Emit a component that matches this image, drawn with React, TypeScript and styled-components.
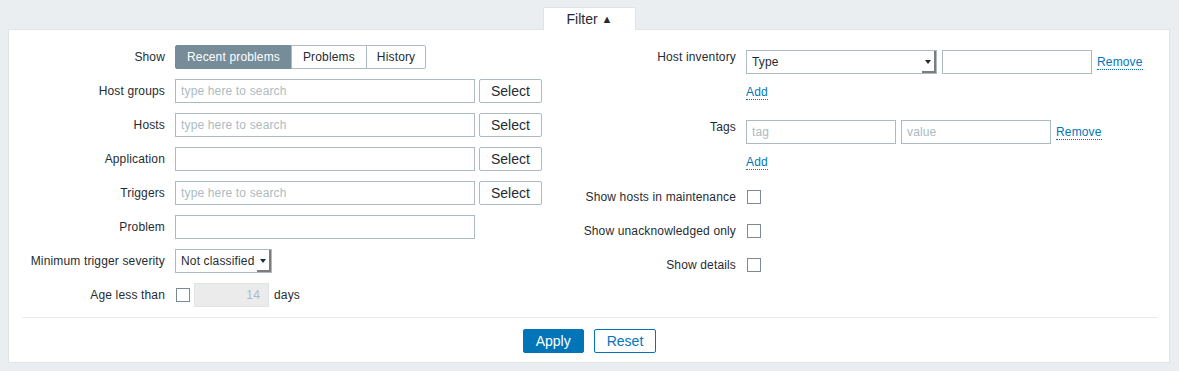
import styled, {createGlobalStyle} from "styled-components";

const GlobalStyle = createGlobalStyle`
  html, body {
    margin: 0;
    padding: 0;
    background: #ebeef0;
  }
  body {
    font-family: "Liberation Sans", Arial, sans-serif;
    font-size: 12px;
    letter-spacing: 0.15px;
    color: #1f2c33;
  }
  * { box-sizing: border-box; }
`

type FieldRow = { label: string, placeholder?: string, withSelect?: boolean }

const leftRows: FieldRow[] = [
    {label: "Host groups", placeholder: "type here to search", withSelect: true},
    {label: "Hosts", placeholder: "type here to search", withSelect: true},
    {label: "Application", withSelect: true},
    {label: "Triggers", placeholder: "type here to search", withSelect: true},
    {label: "Problem"},
]

const showOptions = ["Recent problems", "Problems", "History"]

const checkRows = ["Show hosts in maintenance", "Show unacknowledged only", "Show details"]

export default function App() {
    return (
        <Page>
            <GlobalStyle/>
            <TabBar>
                <Tab>Filter <TabArrow>▲</TabArrow></Tab>
            </TabBar>
            <Panel>
                <Columns>
                    <LeftForm>
                        <Label>Show</Label>
                        <Segmented>
                            {showOptions.map((o, i) => (
                                <Segment key={o} active={i === 0}>{o}</Segment>
                            ))}
                        </Segmented>

                        {leftRows.map(r => (
                            <FormRowFragment key={r.label} row={r}/>
                        ))}

                        <Label>Minimum trigger severity</Label>
                        <Controls>
                            <DropDown width={97}>
                                <DropText>Not classified</DropText>
                                <DropArrow/>
                            </DropDown>
                        </Controls>

                        <Label>Age less than</Label>
                        <Controls>
                            <CheckBox/>
                            <DisabledInput>14</DisabledInput>
                            <span>days</span>
                        </Controls>
                    </LeftForm>

                    <RightForm>
                        <TopLabel>Host inventory</TopLabel>
                        <Stack>
                            <Controls gap={5}>
                                <DropDown width={191}>
                                    <DropText>Type</DropText>
                                    <DropArrow/>
                                </DropDown>
                                <TextInput width={150}/>
                                <LinkText>Remove</LinkText>
                            </Controls>
                            <AddLine><LinkText>Add</LinkText></AddLine>
                        </Stack>

                        <TopLabel>Tags</TopLabel>
                        <Stack>
                            <Controls gap={5}>
                                <TextInput width={150} placeholder="tag"/>
                                <TextInput width={150} placeholder="value"/>
                                <LinkText>Remove</LinkText>
                            </Controls>
                            <AddLine><LinkText>Add</LinkText></AddLine>
                        </Stack>

                        {checkRows.map(c => (
                            <CheckRowFragment key={c} label={c}/>
                        ))}
                    </RightForm>
                </Columns>

                <Footer>
                    <PrimaryButton>Apply</PrimaryButton>
                    <OutlineButton>Reset</OutlineButton>
                </Footer>
            </Panel>
        </Page>
    );
}

const FormRowFragment = ({row}: { row: FieldRow }) => (
    <>
        <Label>{row.label}</Label>
        <Controls>
            <TextInput width={300} placeholder={row.placeholder}/>
            {row.withSelect && <GreyButton>Select</GreyButton>}
        </Controls>
    </>
)

const CheckRowFragment = ({label}: { label: string }) => (
    <>
        <Label>{label}</Label>
        <Controls>
            <CheckBox/>
        </Controls>
    </>
)

const Page = styled.div`
  padding: 7px 9px 0 8px;
  height: 371px;
`

const TabBar = styled.div`
  display: flex;
  justify-content: center;
  margin-left: 1px;
`

const Tab = styled.div`
  width: 93px;
  height: 23px;
  margin-bottom: -1px;
  background: #ffffff;
  border: 1px solid #dfe4e7;
  border-bottom: none;
  border-radius: 2px 2px 0 0;
  font-size: 14px;
  letter-spacing: 0;
  line-height: 22px;
  text-align: center;
  color: #1f2c33;
  position: relative;
  z-index: 1;
`

const TabArrow = styled.span`
  font-size: 11px;
  vertical-align: 1px;
`

const Panel = styled.div`
  background: #ffffff;
  border: 1px solid #dfe4e7;
  padding: 15px 12px 9px 13px;
`

const Columns = styled.div`
  display: flex;
  padding-bottom: 10px;
  border-bottom: 1px solid #e6e9eb;
`

const LeftForm = styled.div`
  width: 538px;
  display: grid;
  grid-template-columns: 143px auto;
  column-gap: 10px;
  row-gap: 10px;
  align-content: start;
`

const RightForm = styled.div`
  flex: 1;
  display: grid;
  grid-template-columns: 176px auto;
  column-gap: 10px;
  row-gap: 10px;
  align-content: start;
`

const Label = styled.div`
  height: 24px;
  line-height: 24px;
  text-align: right;
  white-space: nowrap;
`

const TopLabel = styled.div`
  padding-top: 5px;
  line-height: 14px;
  text-align: right;
  white-space: nowrap;
`

const Controls = styled.div<{ gap?: number }>`
  display: flex;
  align-items: center;
  gap: ${p => p.gap ?? 4}px;
  height: 24px;
`

const Stack = styled.div`
  padding: 5px 0 6px;
`

const AddLine = styled.div`
  margin-top: 11px;
  line-height: 14px;
`

const Segmented = styled.div`
  display: flex;
  height: 24px;
`

const Segment = styled.div<{ active?: boolean }>`
  height: 24px;
  line-height: 22px;
  padding: 0 11px;
  border: 1px solid ${p => p.active ? "#768d99" : "#acbbc2"};
  margin-left: -1px;
  background: ${p => p.active ? "#768d99" : "#ffffff"};
  color: ${p => p.active ? "#ffffff" : "#1f2c33"};
  white-space: nowrap;
  &:first-child {
    margin-left: 0;
    border-radius: 2px 0 0 2px;
  }
  &:last-child {
    padding: 0 10px;
    border-radius: 0 2px 2px 0;
  }
`

const TextInput = styled.input<{ width: number }>`
  width: ${p => p.width}px;
  height: 24px;
  border: 1px solid #acbbc2;
  background: #ffffff;
  padding: 0 5px;
  font-family: "Liberation Sans", Arial, sans-serif;
  font-size: 12px;
  letter-spacing: 0.15px;
  color: #1f2c33;
  outline: none;
  margin: 0;

  &::placeholder {
    color: #acbbc2;
  }
`

const GreyButton = styled.div`
  height: 24px;
  line-height: 22px;
  padding: 0 11px;
  border: 1px solid #acbbc2;
  border-radius: 2px;
  background: #ffffff;
  font-size: 14px;
  letter-spacing: 0;
  color: #1f2c33;
`

const DropDown = styled.div<{ width: number }>`
  width: ${p => p.width}px;
  height: 24px;
  border: 1px solid #acbbc2;
  background: #ffffff;
  display: flex;
  align-items: stretch;
`

const DropText = styled.div`
  flex: 1;
  padding-left: 5px;
  line-height: 22px;
  white-space: nowrap;
`

const DropArrow = styled.div`
  width: 14px;
  border-right: 2px solid #7d7d7d;
  border-bottom: 2px solid #7d7d7d;
  display: flex;
  align-items: center;
  justify-content: center;

  &::after {
    content: "";
    border-left: 3px solid transparent;
    border-right: 3px solid transparent;
    border-top: 4px solid #1f2c33;
    margin-top: 1px;
  }
`

const CheckBox = styled.div`
  width: 14px;
  height: 14px;
  margin-left: 1px;
  border: 1px solid #7b8a93;
  background: #ffffff;
`

const DisabledInput = styled.div`
  width: 75px;
  height: 24px;
  line-height: 22px;
  border: 1px solid #dfe4e7;
  background: #ebebeb;
  color: #acbbc2;
  text-align: right;
  padding-right: 8px;
  margin-right: 1px;
`

const LinkText = styled.span`
  color: #0275b8;
  border-bottom: 1px dotted #0275b8;
  line-height: 14px;
  cursor: pointer;
`

const Footer = styled.div`
  display: flex;
  justify-content: center;
  gap: 10px;
  padding-top: 11px;
`

const PrimaryButton = styled.div`
  height: 24px;
  line-height: 22px;
  padding: 0 12px;
  border: 1px solid #0275b8;
  border-radius: 2px;
  background: #0275b8;
  color: #ffffff;
  font-size: 14px;
  letter-spacing: 0;
`

const OutlineButton = styled(PrimaryButton)`
  background: #ffffff;
  color: #0275b8;
`
